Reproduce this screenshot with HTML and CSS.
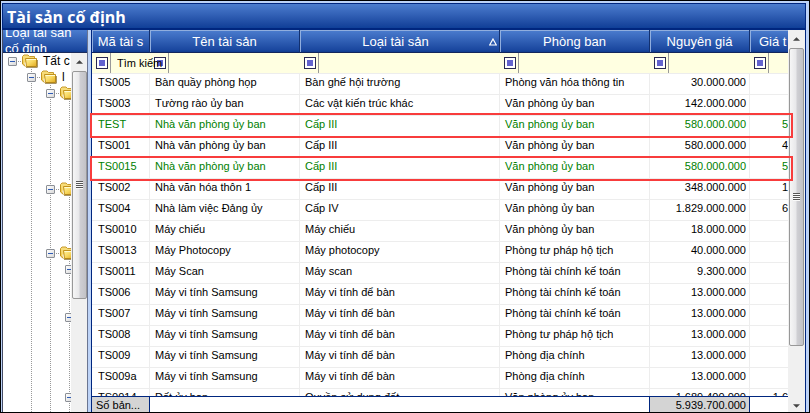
FILE: index.html
```html
<!DOCTYPE html>
<html lang="vi">
<head>
<meta charset="utf-8">
<title>Tài sản cố định</title>
<link rel="stylesheet" href="styles.css">
</head>
<body>
<svg width="0" height="0" class="defs" aria-hidden="true">
  <defs>
    <linearGradient id="gold" x1="0" y1="0" x2="1" y2="1">
      <stop offset="0" stop-color="#fff3a8"/><stop offset=".5" stop-color="#f8d860"/><stop offset="1" stop-color="#e0a820"/>
    </linearGradient>
    <symbol id="folder" viewBox="0 0 16 14">
      <path d="M.500 9.500V2.500L2 1h4l1.500 1.500H12.500V5" fill="#f7dc78" stroke="#c79a2c"/>
      <path d="M.500 3v7l3 2.500" fill="#f3cf58" stroke="#c4951f"/>
      <path d="M3.500 4.500h11v8H4.500z" fill="url(#gold)" stroke="#c2921c"/>
      <path d="M4.500 5.500h9.500" stroke="#fffbd0"/>
      <path d="M4 13.300h11.300V6" fill="none" stroke="#7a5a10" stroke-width=".8"/>
    </symbol>
    <symbol id="up" viewBox="0 0 8 4"><path d="M0 4L4 0L8 4z" fill="#444"/></symbol>
    <symbol id="down" viewBox="0 0 8 4"><path d="M0 0h8L4 4z" fill="#444"/></symbol>
  </defs>
</svg>
<main class="window">
  <h1 class="title">Tài sản cố định</h1>
  <div class="panes">
    <aside class="side">
      <h2 class="side-head">Loại tài sản cố định</h2>
      <div class="side-body">
        <ul class="tree">
          <li><div class="node"><button class="toggle" aria-label="Thu gọn"></button><i class="tick"></i><svg class="folder"><use href="#folder"/></svg><span>Tất c</span></div>
            <ul>
              <li><div class="node"><button class="toggle" aria-label="Thu gọn"></button><i class="tick"></i><svg class="folder"><use href="#folder"/></svg><span>l</span></div>
                <ul>
                  <li><div class="node"><button class="toggle" aria-label="Thu gọn"></button><i class="tick"></i><svg class="folder"><use href="#folder"/></svg></div>
                    <ul><li class="leaf"></li><li class="leaf"></li><li class="leaf"></li><li class="leaf"></li><li class="leaf"></li></ul></li>
                  <li><div class="node"><button class="toggle" aria-label="Thu gọn"></button><i class="tick"></i><svg class="folder"><use href="#folder"/></svg></div>
                    <ul><li class="leaf"></li><li class="leaf"></li><li class="leaf"></li></ul></li>
                  <li><div class="node"><button class="toggle" aria-label="Thu gọn"></button><i class="tick"></i><svg class="folder"><use href="#folder"/></svg></div>
                    <ul>
                      <li><div class="node"><button class="toggle" aria-label="Thu gọn"></button></div></li>
                      <li class="leaf"></li><li class="leaf"></li>
                      <li><div class="node"><button class="toggle" aria-label="Thu gọn"></button></div></li>
                      <li class="leaf"></li><li class="leaf"></li><li class="leaf"></li><li class="leaf"></li>
                      <li><div class="node"><button class="toggle" aria-label="Thu gọn"></button></div></li>
                      <li class="leaf"></li>
                    </ul></li>
                </ul></li>
            </ul></li>
        </ul>
        <div class="scroll">
          <svg class="arrow"><use href="#up"/></svg>
          <div class="thumb side-thumb"><i class="grip"></i></div>
        </div>
      </div>
    </aside>
    <section class="grid">
      <div class="grid-main">
        <div class="rows">
          <table>
            <colgroup><col class="c-code"><col class="c-name"><col><col class="c-dept"><col class="c-cost"><col class="c-rest"></colgroup>
            <thead>
              <tr>
                <th>Mã tài s</th><th>Tên tài sản</th>
                <th><div class="sorted"><span>Loại tài sản</span><svg class="sort" viewBox="0 0 8 8"><path d="M4 1L7.300 7H.700z" fill="none" stroke="#fff" stroke-width="1.200"/></svg></div></th>
                <th>Phòng ban</th><th>Nguyên giá</th><th class="cut">Giá t</th>
              </tr>
              <tr class="filters">
                <td><div class="filter"><button class="op" aria-label="Điều kiện mã"></button><input class="search" aria-label="Tìm kiếm" value="Tìm kiếm"></div></td>
                <td><div class="filter"><button class="op" aria-label="Điều kiện tên"></button><input aria-label="Tên tài sản"></div></td>
                <td><div class="filter"><button class="op" aria-label="Điều kiện loại"></button><input aria-label="Loại tài sản"></div></td>
                <td><div class="filter"><button class="op" aria-label="Điều kiện phòng"></button><input aria-label="Phòng ban"></div></td>
                <td><div class="filter"><button class="op" aria-label="Điều kiện nguyên giá"></button><input aria-label="Nguyên giá"></div></td>
                <td><div class="filter"><button class="op" aria-label="Điều kiện giá trị"></button><input aria-label="Giá trị"></div></td>
              </tr>
            </thead>
            <tbody>
              <tr><td>TS005</td><td>Bàn quầy phòng họp</td><td>Bàn ghế hội trường</td><td>Phòng văn hóa thông tin</td><td>30.000.000</td><td></td></tr>
              <tr><td>TS003</td><td>Tường rào ủy ban</td><td>Các vật kiến trúc khác</td><td>Văn phòng ủy ban</td><td>142.000.000</td><td></td></tr>
              <tr class="new"><td>TEST</td><td>Nhà văn phòng ủy ban</td><td>Cấp III</td><td>Văn phòng ủy ban</td><td>580.000.000</td><td>5</td></tr>
              <tr><td>TS001</td><td>Nhà văn phòng ủy ban</td><td>Cấp III</td><td>Văn phòng ủy ban</td><td>580.000.000</td><td>4</td></tr>
              <tr class="new"><td>TS0015</td><td>Nhà văn phòng ủy ban</td><td>Cấp III</td><td>Văn phòng ủy ban</td><td>580.000.000</td><td>5</td></tr>
              <tr><td>TS002</td><td>Nhà văn hóa thôn 1</td><td>Cấp III</td><td>Văn phòng ủy ban</td><td>348.000.000</td><td>1</td></tr>
              <tr><td>TS004</td><td>Nhà làm việc Đảng ủy</td><td>Cấp IV</td><td>Văn phòng ủy ban</td><td>1.829.000.000</td><td>6</td></tr>
              <tr><td>TS0010</td><td>Máy chiếu</td><td>Máy chiếu</td><td>Văn phòng ủy ban</td><td>18.000.000</td><td></td></tr>
              <tr><td>TS0013</td><td>Máy Photocopy</td><td>Máy photocopy</td><td>Phòng tư pháp hộ tịch</td><td>40.000.000</td><td></td></tr>
              <tr><td>TS0011</td><td>Máy Scan</td><td>Máy scan</td><td>Phòng tài chính kế toán</td><td>9.300.000</td><td></td></tr>
              <tr><td>TS006</td><td>Máy vi tính Samsung</td><td>Máy vi tính để bàn</td><td>Phòng tài chính kế toán</td><td>13.000.000</td><td></td></tr>
              <tr><td>TS007</td><td>Máy vi tính Samsung</td><td>Máy vi tính để bàn</td><td>Phòng tài chính kế toán</td><td>13.000.000</td><td></td></tr>
              <tr><td>TS008</td><td>Máy vi tính Samsung</td><td>Máy vi tính để bàn</td><td>Phòng tư pháp hộ tịch</td><td>13.000.000</td><td></td></tr>
              <tr><td>TS009</td><td>Máy vi tính Samsung</td><td>Máy vi tính để bàn</td><td>Phòng địa chính</td><td>13.000.000</td><td></td></tr>
              <tr><td>TS009a</td><td>Máy vi tính Samsung</td><td>Máy vi tính để bàn</td><td>Phòng địa chính</td><td>13.000.000</td><td></td></tr>
              <tr><td>TS0014</td><td>Đất ủy ban</td><td>Quyền sử dụng đất</td><td>Văn phòng ủy ban</td><td>1.689.400.000</td><td>1.6</td></tr>
            </tbody>
          </table>
        </div>
        <div class="summary"><span class="count">Số bản...</span><span class="space"></span><span class="total">5.939.700.000</span><span class="rest"></span></div>
      </div>
      <div class="scroll grid-scroll">
        <svg class="arrow"><use href="#up"/></svg>
        <div class="thumb"><i class="grip"></i></div>
        <svg class="arrow"><use href="#down"/></svg>
      </div>
      <div class="mark mark-first"></div>
      <div class="mark mark-second"></div>
    </section>
  </div>
</main>
</body>
</html>
```
FILE: styles.css
```css
* { box-sizing: border-box; }

body {
  margin: 0;
  background: #000;
  font: 12px/16px "Liberation Sans", Arial, sans-serif;
  color: #000;
}

.defs { position: absolute; }

.window {
  display: flex;
  flex-direction: column;
  height: 100vh;
  padding: 2px 3px 0 1px;
  border: 1px solid #000;
  background: #bdd3f7;
}

.title {
  flex: none;
  margin: 0;
  height: 27px;
  padding-left: 4px;
  border: 1px solid #00267f;
  border-bottom-width: 2px;
  background: linear-gradient(#4c7dcf, #1a479f 85%, #0f3f98);
  color: #fff;
  font: bold 16px/26px "Open Sans", sans-serif;
}

.panes { display: flex; flex: 1; min-height: 0; }

.side {
  display: flex;
  flex-direction: column;
  flex: none;
  width: 86px;
  border-left: 1px solid #444c66;
  border-right: 1px solid #6a7591;
  background: #fff;
}

.side-head, th {
  background: linear-gradient(#4c7dcf, #1a479f 90%, #103c8f);
  color: #fff;
  font: 13px/16px "Liberation Sans", Arial, sans-serif;
}

.side-head {
  display: flex;
  align-items: center;
  flex: none;
  height: 23px;
  margin: 0;
  padding-left: 2px;
  border-bottom: 1px solid #1b2c5c;
  overflow: hidden;
}

.side-body { display: flex; flex: 1; min-height: 0; }

.tree { flex: 1; min-width: 0; overflow: hidden; padding-left: 9px; }
.tree, .tree ul { margin: 0; list-style: none; }
.tree ul { margin-left: 19px; padding: 0; background: repeating-linear-gradient(#999 0 1px, transparent 1px 2px) left / 1px 100% no-repeat; }
.node { display: flex; align-items: center; height: 16px; margin-left: -4px; white-space: nowrap; }
.leaf { height: 16px; }

.toggle {
  flex: none;
  width: 9px;
  height: 9px;
  padding: 0;
  border: 1px solid #8b8f96;
  border-radius: 1px;
  background: linear-gradient(#2f5cb5, #2f5cb5) center / 5px 1px no-repeat, linear-gradient(135deg, #fff, #d9d9d9);
}

.tick { flex: none; width: 5px; height: 1px; background: repeating-linear-gradient(90deg, transparent 0 1px, #999 1px 2px); }
.folder { flex: none; width: 16px; height: 14px; margin-right: 5px; }

.scroll {
  display: flex;
  flex-direction: column;
  align-items: center;
  flex: none;
  width: 16px;
  background: #f0f0f0;
}

.arrow { flex: none; width: 7px; height: 4px; margin: 7px 0; }

.thumb {
  display: flex;
  align-items: center;
  justify-content: center;
  width: 15px;
  border: 1px solid #989898;
  border-radius: 2px;
  background: linear-gradient(90deg, #f6f6f6, #e8e8ea 45%, #cfcfd3 55%, #c2c2c6);
}

.side-thumb { flex: none; height: 63.5%; }
.grid-scroll { width: 17px; }
.grid-scroll .thumb { height: 78%; }
.grid-scroll .arrow:last-child { margin-top: auto; margin-bottom: 4px; }
.grip { width: 7px; height: 8px; background: repeating-linear-gradient(#555 0 1px, #fafafa 1px 2px); }

.grid {
  position: relative;
  display: flex;
  flex: 1;
  min-width: 0;
  margin-left: 3px;
  border-left: 1px solid #00267f;
  border-right: 1px solid #00267f;
  background: #fff;
}

.grid-main { display: flex; flex-direction: column; flex: 1; min-width: 0; }
.rows { flex: 1; min-height: 0; overflow: hidden; }

table { width: 100%; border-collapse: separate; border-spacing: 0; table-layout: fixed; }
.c-code { width: 58px; }
.c-name, .c-dept { width: 150px; }
.c-cost { width: 100px; }
.c-rest { width: 38px; }

th {
  height: 23px;
  padding: 2px 0 0;
  border-right: 1px solid #12306f;
  border-bottom: 1px solid #12265c;
  box-shadow: inset 1px 1px #90aede;
  overflow: hidden;
  white-space: nowrap;
}
th.cut { padding-left: 9px; border-right: 0; text-align: left; }
.sorted { display: flex; align-items: center; padding: 0 2px 0 2px; }
.sorted span { flex: 1; }
.sort { width: 8px; height: 8px; }

.filters td { height: 20px; padding: 0; background: #ffffe1; }
.filter { display: flex; align-items: center; height: 20px; padding-left: 4px; }
.op { flex: none; width: 12px; height: 12px; margin-right: 2px; padding: 0; border: 1px solid #292952; background: #6363ce; box-shadow: inset 0 0 0 2px #fff; }
.filter input { flex: 1; width: 0; height: 20px; padding: 0 0 0 6px; border: 0; border-left: 1px solid #999; border-radius: 0; background: none; outline: 0; font: inherit; font-size: 11px; }
.filter .search { position: relative; z-index: 1; flex: none; width: 56px; }

tbody td {
  height: 21px;
  padding: 0 0 4px 5px;
  border-top: 1px solid #ededed;
  border-right: 1px solid #ededed;
  font-size: 11px;
  white-space: nowrap;
}
tbody td:first-child { padding-left: 6px; }
tbody td:nth-child(n+5) { padding-right: 3px; text-align: right; }
tbody td:last-child { padding-left: 0; padding-right: 0; border-right: 0; }
.new { color: #008000; }

.summary {
  display: flex;
  flex: none;
  height: 16px;
  border-top: 1px solid #00267f;
  font-size: 11px;
  line-height: 16px;
}
.summary span { border-right: 1px solid #00267f; }
.summary .count { width: 58px; padding-left: 4px; background: #d4d4d4; }
.summary .space { flex: 1; }
.summary .total { width: 100px; padding-right: 3px; background: #d4d4d4; text-align: right; }
.summary .rest { width: 38px; border: 0; }

/* Highlight frames laid over the newly added records */
.mark { position: absolute; left: -2px; right: 12px; height: 25px; border: 2px solid #f83c3c; }
.mark-first { top: 83px; }
.mark-second { top: 126px; }
```
